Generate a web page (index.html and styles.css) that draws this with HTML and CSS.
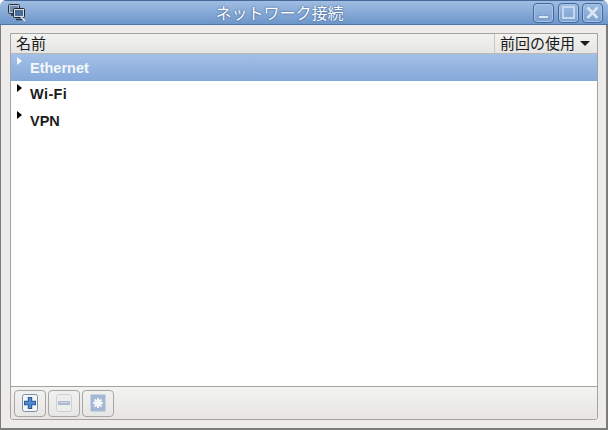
FILE: index.html
```html
<!DOCTYPE html>
<html lang="ja">
<head>
<meta charset="utf-8">
<title>ネットワーク接続</title>
<link rel="stylesheet" href="styles.css">
</head>
<body>
<div class="window">
  <header class="titlebar">
    <svg class="app-icon" width="18" height="18" viewBox="0 0 18 18">
      <rect x="0.5" y="0.5" width="11" height="9" rx="1" fill="#b9c4d2" stroke="#2c333d"/>
      <rect x="2" y="2" width="8" height="6" fill="#6f8db3"/>
      <path d="M3 11h6" stroke="#2c333d" stroke-width="1.4"/>
      <rect x="5.5" y="4.5" width="11" height="9" rx="1" fill="#d5dce6" stroke="#20262e"/>
      <rect x="7" y="6" width="8" height="6" fill="#4a6c98"/>
      <path d="M8 15.5h7" stroke="#2c333d" stroke-width="1.6"/>
      <path d="M13 13l4 4" stroke="#eef1f4" stroke-width="1.5"/>
    </svg>
    <div class="title">ネットワーク接続</div>
    <div class="controls">
      <div class="ctl">
        <svg width="19" height="18" viewBox="0 0 19 18"><rect x="4.5" y="11.5" width="10" height="3" fill="#dbe6f3" stroke="#5f86ba" stroke-width="0.6"/></svg>
      </div>
      <div class="ctl">
        <svg width="19" height="18" viewBox="0 0 19 18"><rect x="4" y="3" width="11" height="11" fill="none" stroke="#c6d8ee" stroke-width="2"/></svg>
      </div>
      <div class="ctl">
        <svg width="19" height="18" viewBox="0 0 19 18"><path d="M4.5 3.5l10 10.5M14.5 3.5l-10 10.5" fill="none" stroke="#dbe5f1" stroke-width="2.6"/></svg>
      </div>
    </div>
  </header>
  <main class="body">
    <section class="panel">
      <div class="head">
        <div class="col-name">名前</div>
        <div class="col-last">前回の使用<span class="sort"></span></div>
      </div>
      <div class="list">
        <div class="row selected"><span class="arrow"></span><span class="label">Ethernet</span></div>
        <div class="row"><span class="arrow"></span><span class="label wide">Wi-Fi</span></div>
        <div class="row"><span class="arrow"></span><span class="label">VPN</span></div>
      </div>
      <div class="toolbar">
        <button class="tool">
          <svg width="16" height="18" viewBox="0 0 16 18"><rect x="0.5" y="0.5" width="15" height="17" rx="2" fill="#f4f5f6" stroke="#7d8ea5"/><path d="M8 3v12M2 9h12" stroke="#2a5b96" stroke-width="4.4"/><path d="M8 4v10M3 9h10" stroke="#4f8ad0" stroke-width="2.4"/></svg>
        </button>
        <button class="tool">
          <svg width="16" height="18" viewBox="0 0 16 18"><rect x="0.5" y="0.5" width="15" height="17" rx="2" fill="#eceded" stroke="#cdd1d5"/><path d="M2 9h12" stroke="#a9b8cc" stroke-width="4"/><path d="M3 8.5h10" stroke="#c6d1df" stroke-width="1.4"/></svg>
        </button>
        <button class="tool">
          <svg width="16" height="18" viewBox="0 0 16 18"><rect x="0.5" y="0.5" width="15" height="17" rx="1" fill="#a3b8d6" stroke="#c8d2de"/><path d="M8 4v10M3 9h10M4.5 5.5l7 7M11.5 5.5l-7 7" stroke="#f4f5f7" stroke-width="2"/><circle cx="8" cy="9" r="3.4" fill="#f4f5f7"/></svg>
        </button>
      </div>
    </section>
  </main>
</div>
</body>
</html>
```

FILE: styles.css
```css
* { box-sizing: border-box; }
html, body { margin: 0; padding: 0; }
body {
  width: 608px;
  height: 430px;
  overflow: hidden;
  background: #fff;
  font-family: "Liberation Sans", "Noto Sans CJK JP", sans-serif;
}
.window {
  width: 608px;
  height: 430px;
  display: flex;
  flex-direction: column;
  background: #edecea;
  border-radius: 6px 6px 0 0;
  overflow: hidden;
}
.titlebar {
  height: 25px;
  flex: none;
  display: flex;
  align-items: center;
  background: linear-gradient(#a0bde2, #6d96ca);
  border-top: 1px solid #45699b;
  border-bottom: 1px solid #4f74a6;
  padding: 0 5px 0 8px;
}
.app-icon { flex: none; }
.title {
  flex: 1;
  margin-top: -2px;
  text-align: center;
  color: #fff;
  font-size: 16px;
  line-height: 20px;
  font-family: "Noto Sans CJK JP", sans-serif;
  text-shadow: 0 0 2px #3d6295, 0 0 1px #3d6295;
}
.controls {
  display: flex;
  gap: 3.5px;
}
.ctl {
  width: 21px;
  height: 20px;
  border: 1px solid #44699c;
  border-radius: 4px;
  background: linear-gradient(#9dbbe2, #7ba1d2);
  box-shadow: inset 0 0 0 1px #a9c4e6;
  display: flex;
  align-items: center;
  justify-content: center;
}
.ctl svg { flex: none; }
.body {
  flex: 1;
  display: flex;
  padding: 8px 8px 8px 9px;
  min-height: 0;
  border-left: 1px solid #7c7c7a;
  border-right: 2px solid #7c7c7a;
  border-bottom: 2px solid #7c7c7a;
}
.panel {
  flex: 1;
  display: flex;
  flex-direction: column;
  border: 1px solid #a4a3a1;
  border-radius: 0 0 3px 3px;
  background: #fff;
  min-width: 0;
}
.head {
  height: 20px;
  flex: none;
  display: flex;
  background: linear-gradient(#f2f2f0, #e6e5e3);
  border-bottom: 1px solid #b8b7b4;
  font-size: 15px;
  color: #1c1c1c;
  line-height: 18px;
  font-family: "Noto Sans CJK JP", sans-serif;
}
.col-name { flex: 1; padding-left: 5px; }
.col-last {
  width: 103px;
  padding-left: 5px;
  border-left: 1px solid #c8c7c4;
  display: flex;
  align-items: flex-start;
}
.sort {
  align-self: center;
  margin-left: 5px;
  width: 0;
  height: 0;
  border-left: 5px solid transparent;
  border-right: 5px solid transparent;
  border-top: 5px solid #1c1c1c;
}
.list { flex: 1; min-height: 0; }
.row {
  height: 26.5px;
  display: flex;
  align-items: center;
  font-size: 14.5px;
  font-weight: 700;
  color: #1c1c1c;
  position: relative;
  padding-left: 19px;
}
.row.selected {
  height: 27px;
  color: #f4f7fb;
  background: linear-gradient(#a3c0e6, #85a9da);
}
.label.wide { letter-spacing: 0.4px; }
.arrow {
  position: absolute;
  left: 6px;
  top: 3px;
  width: 0;
  height: 0;
  border-top: 4px solid transparent;
  border-bottom: 4px solid transparent;
  border-left: 5px solid #000;
}
.selected .arrow { border-left-color: #f4f7fb; }
.toolbar {
  height: 33px;
  flex: none;
  display: flex;
  align-items: center;
  gap: 2px;
  padding-left: 3px;
  background: linear-gradient(#f3f3f1, #e6e5e3);
  border-top: 1px solid #a4a3a1;
  border-radius: 0 0 3px 3px;
}
.tool {
  width: 32px;
  height: 27px;
  padding: 0;
  margin: 0;
  display: flex;
  align-items: center;
  justify-content: center;
  background: transparent;
  border: 1px solid #a8a7a4;
  border-radius: 4px;
}
```
